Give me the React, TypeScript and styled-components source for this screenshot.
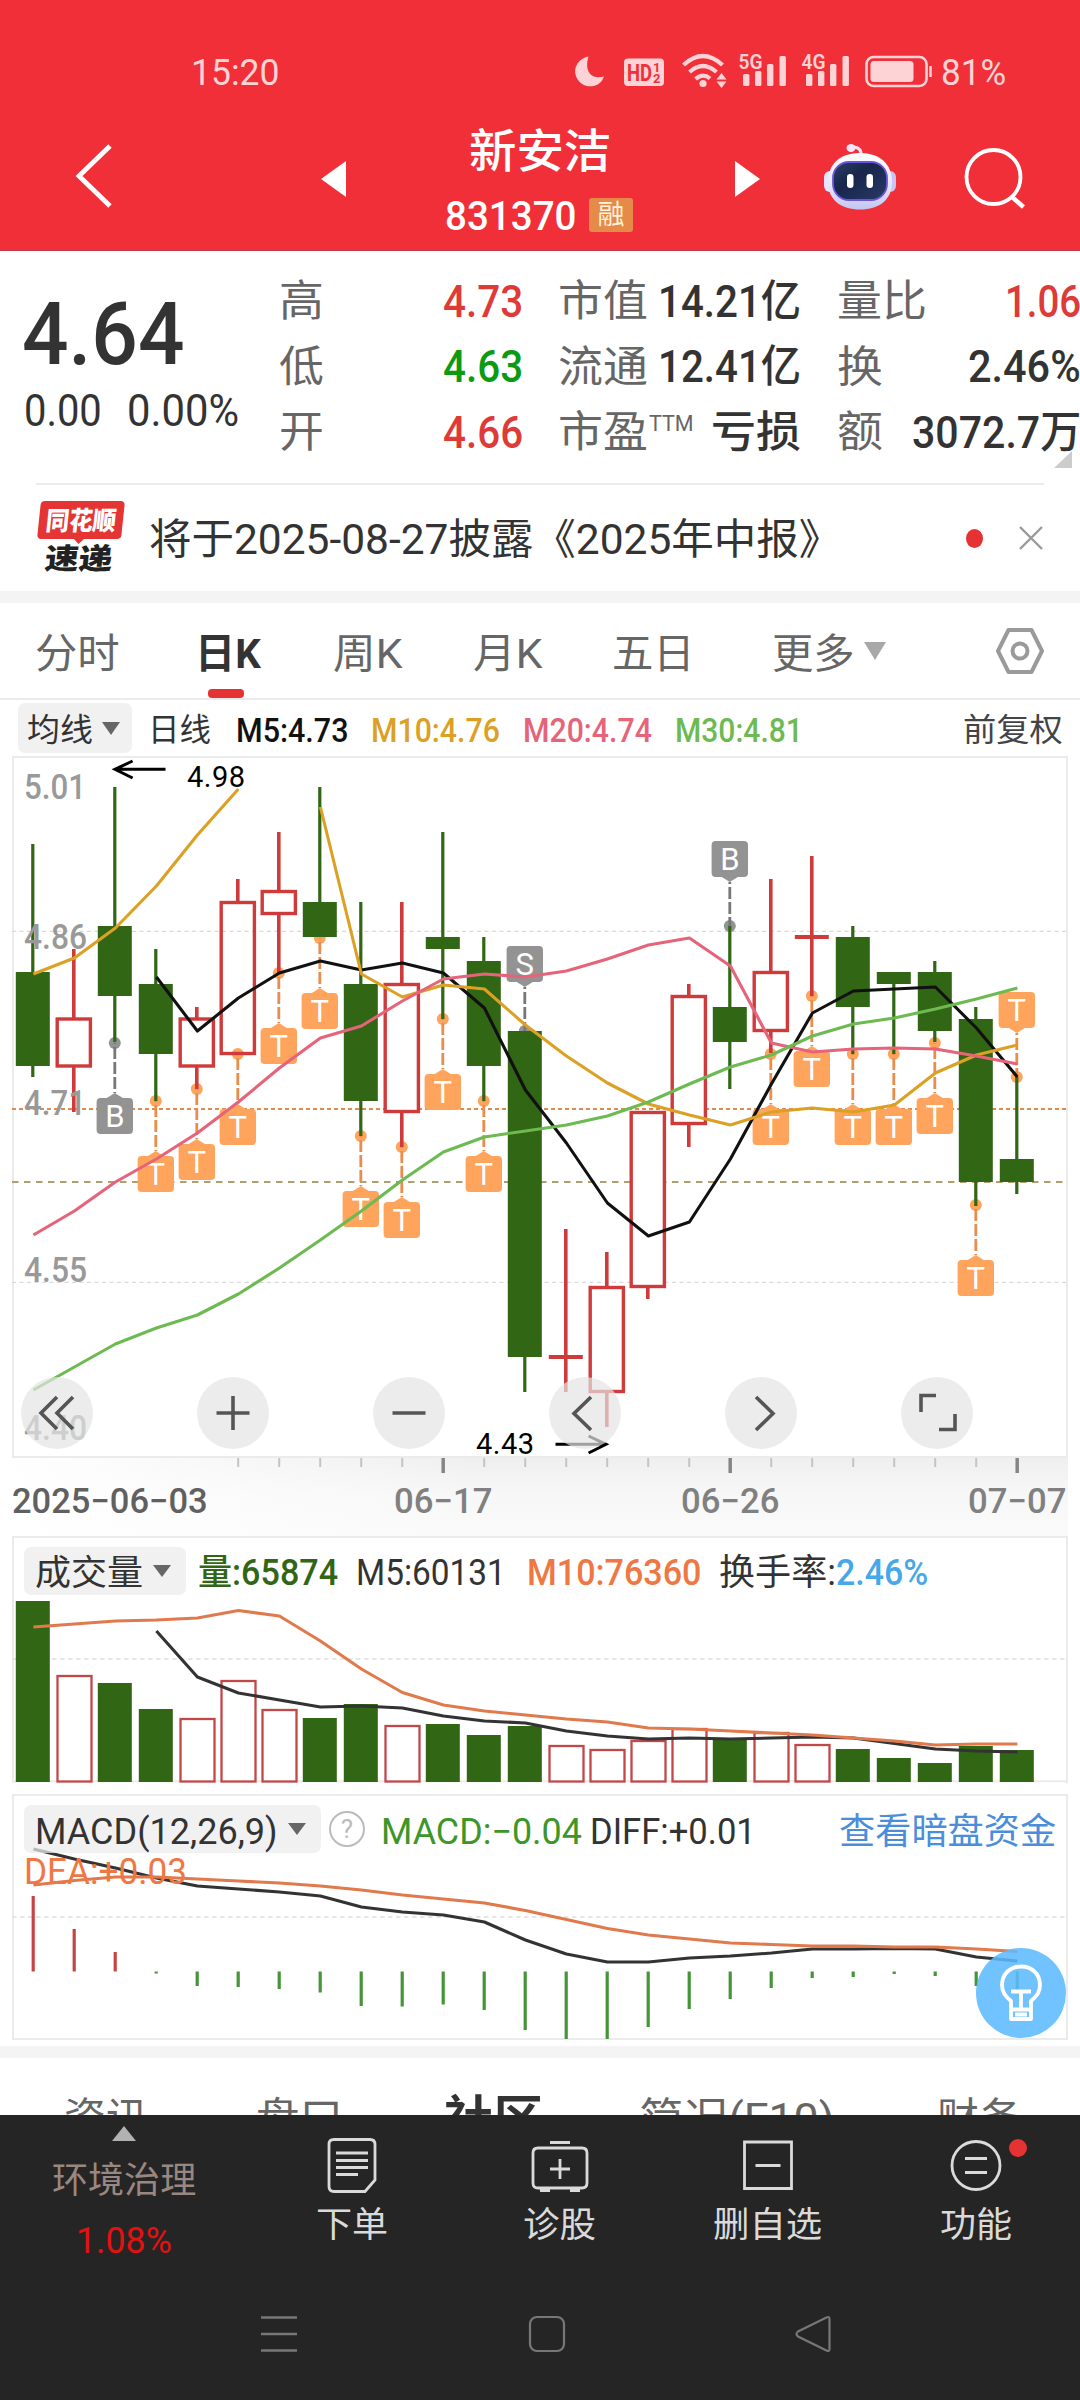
import React, { ReactNode, useLayoutEffect, useRef, useState } from 'react';
import styled, { createGlobalStyle } from 'styled-components';

const Global = createGlobalStyle`
  body { margin: 0; background: #fff; }
  * { box-sizing: border-box; }
  svg { display: block; flex: none; overflow: visible; }
`;

const FONT = 'Roboto, "Noto Sans CJK SC", sans-serif';
const UP = '#cf3a3a';
const DOWN = '#306614';

/* ---------- fitted text ---------- */
const FitBox = styled.span<{ $w: number; $h: number; $ml: number }>`
  display: block;
  flex: none;
  width: ${(p) => p.$w}px;
  height: ${(p) => p.$h}px;
  margin-left: ${(p) => p.$ml}px;
  white-space: nowrap;
`;
const FitInner = styled.span<{ $size: number; $weight: number; $color: string }>`
  display: inline-block;
  vertical-align: top;
  font-size: ${(p) => p.$size}px;
  line-height: 1;
  font-weight: ${(p) => p.$weight};
  color: ${(p) => p.$color};
  margin-left: ${(p) => -p.$size * 0.045}px;
  transform-origin: 0 50%;
`;

type FitProps = { w: number; size: number; color?: string; weight?: number; ml?: number; dy?: number; children: ReactNode };

function Fit({ w, size, color = '#333', weight = 400, ml = 0, dy = 2, children }: FitProps) {
  const ref = useRef<HTMLSpanElement>(null);
  const [scale, setScale] = useState(1);
  useLayoutEffect(() => {
    if (ref.current) setScale((w + size * 0.09) / ref.current.offsetWidth);
  }, [w, size, children]);
  return (
    <FitBox $w={w} $h={size} $ml={ml}>
      <FitInner ref={ref} $size={size} $weight={weight} $color={color} style={{ transform: `translateY(${dy}px) scaleX(${scale})` }}>
        {children}
      </FitInner>
    </FitBox>
  );
}

/* ---------- page ---------- */
const Page = styled.main`
  width: 1080px;
  height: 2400px;
  overflow: hidden;
  display: flex;
  flex-direction: column;
  background: #fff;
  font-family: ${FONT};
`;
const Top = styled.header`
  height: 251px;
  flex: none;
  background: #f12f38;
  border-bottom: 1px solid #b94048;
`;
const StatusBar = styled.div`
  height: 112px;
  padding: 32px 0 0 193px;
  display: flex;
  align-items: center;
`;
const StatusIcons = styled.svg`
  margin-left: 290px;
`;
const TitleBar = styled.div`
  height: 128px;
  padding-left: 72px;
  display: flex;
  align-items: center;
`;
const TitleColumn = styled.div`
  width: 188px;
  height: 128px;
  margin: 0 101px 0 100px;
  padding-top: 15px;
  display: flex;
  flex-direction: column;
  align-items: center;
  gap: 25px;
`;
const CodeLine = styled.div`
  display: flex;
  align-items: center;
  gap: 14px;
  height: 34px;
`;
const MarginTag = styled.span`
  width: 44px;
  height: 34px;
  border-radius: 3px;
  background: #e58a48;
  color: #fff3dc;
  font-size: 27px;
  line-height: 34px;
  text-align: center;
`;
const PrevIcon = styled.svg`
  margin: 6px 0 0 203px;
`;
const NextIcon = styled.svg`
  margin-top: 6px;
`;
const RobotIcon = styled.svg`
  margin-left: 62px;
`;
const SearchIcon = styled.svg`
  margin: 3px 0 0 64px;
`;

/* ---------- quote ---------- */
const Quote = styled.section`
  position: relative;
  height: 232px;
  flex: none;
  display: flex;
  padding: 16px 0 0 26px;
`;
const PriceBlock = styled.div`
  width: 211px;
  padding-top: 25px;
`;
const ChangeLine = styled.div`
  display: flex;
  margin-top: 10px;
`;
const StatColumn = styled.div<{ $ml: number; $w: number }>`
  margin-left: ${(p) => p.$ml}px;
  width: ${(p) => p.$w}px;
  flex: none;
`;
const StatRow = styled.div`
  height: 65.5px;
  display: flex;
  align-items: center;
  justify-content: space-between;
`;
const LabelGroup = styled.div`
  display: flex;
  align-items: flex-start;
`;
const Corner = styled.i`
  position: absolute;
  right: 8px;
  bottom: 15px;
  border-left: 18px solid transparent;
  border-bottom: 17px solid #ccc;
`;

/* ---------- news ---------- */
const News = styled.section`
  height: 108px;
  flex: none;
  margin: 0 36px;
  border-top: 2px solid #ebebeb;
  display: flex;
  align-items: center;
`;
const Logo = styled.div`
  width: 88px;
  height: 74px;
  flex: none;
  margin-left: 1px;
  display: flex;
  flex-direction: column;
  align-items: center;
  gap: 5px;
`;
const LogoTag = styled.div`
  position: relative;
  width: 84px;
  height: 38px;
  padding: 5px 0 0 8px;
  border-radius: 4px;
  background: #e53434;
  transform: skewX(-6deg);
  &::after {
    content: '';
    position: absolute;
    left: 36px;
    top: 37px;
    border: 6px solid transparent;
    border-top-color: #e53434;
    border-bottom: 0;
  }
`;
const LogoWord = styled.div`
  transform: skewX(-6deg);
  margin-left: -6px;
`;
const UnreadDot = styled.i`
  width: 19px;
  height: 19px;
  margin-left: 127px;
  border-radius: 50%;
  background: #e63232;
`;
const CloseIcon = styled.svg`
  margin-left: 35px;
`;
const Band = styled.div<{ $mt?: number }>`
  height: 12px;
  flex: none;
  margin-top: ${(p) => p.$mt ?? 0}px;
  background: #f4f4f4;
`;

/* ---------- chart tabs ---------- */
const PeriodTabs = styled.nav`
  height: 97px;
  flex: none;
  display: flex;
  align-items: center;
  padding-left: 37px;
  border-bottom: 2px solid #ebebeb;
`;
const Tab = styled.div<{ $ml: number; $active?: boolean }>`
  position: relative;
  flex: none;
  margin-left: ${(p) => p.$ml}px;
  &::after {
    content: '';
    display: ${(p) => (p.$active ? 'block' : 'none')};
    position: absolute;
    left: 10px;
    top: 59px;
    width: 36px;
    height: 9px;
    border-radius: 4px;
    background: #e63232;
  }
`;
const CaretDown = styled.i<{ $w: number; $h: number; $color: string; $ml: number }>`
  flex: none;
  margin-left: ${(p) => p.$ml}px;
  border: ${(p) => p.$w / 2}px solid transparent;
  border-top: ${(p) => p.$h}px solid ${(p) => p.$color};
  border-bottom: 0;
`;
const HexIcon = styled.svg`
  margin-left: 109px;
`;
const Legend = styled.div`
  height: 56px;
  flex: none;
  display: flex;
  align-items: center;
  padding-left: 18px;
`;
const Pill = styled.div<{ $w: number; $h: number; $pl: number }>`
  width: ${(p) => p.$w}px;
  height: ${(p) => p.$h}px;
  padding-left: ${(p) => p.$pl}px;
  flex: none;
  display: flex;
  align-items: center;
  border-radius: 7px;
  background: #f1f1f1;
`;
const GlassPill = styled(Pill)`
  background: rgba(236, 236, 236, 0.72);
`;

/* ---------- charts ---------- */
const Panel = styled.section<{ $h: number; $mt?: number }>`
  position: relative;
  height: ${(p) => p.$h}px;
  margin-top: ${(p) => p.$mt ?? 0}px;
  flex: none;
  display: grid;
  > * { grid-area: 1 / 1; }
`;
const PanelHead = styled.div`
  position: relative;
  height: 48px;
  margin: 11px 0 0 24px;
  display: flex;
  align-items: center;
`;
const Controls = styled.div`
  position: relative;
  align-self: end;
  display: flex;
  gap: 104px;
  padding: 0 0 9px 21px;
`;
const RoundButton = styled.button`
  width: 72px;
  height: 72px;
  flex: none;
  padding: 0;
  border: 0;
  border-radius: 50%;
  background: rgba(228, 228, 228, 0.7);
  display: flex;
  align-items: center;
  justify-content: center;
`;
const DateAxis = styled.div`
  height: 78px;
  flex: none;
  display: flex;
  flex-direction: column;
  margin-right: 12px;
  background: linear-gradient(90deg, #fff 0, rgba(255, 255, 255, 0.55) 220px, transparent 480px),
    linear-gradient(#efefef, #f7f7f7 45%, #fafafa);
`;
const DateRow = styled.div`
  display: flex;
  margin-top: 4px;
  padding-left: 14px;
`;
const DeaText = styled.div`
  position: relative;
  margin: 58px 0 0 26px;
`;
const Tip = styled.button`
  position: absolute;
  left: 976px;
  top: 154px;
  width: 90px;
  height: 90px;
  padding: 0;
  border: 0;
  border-radius: 50%;
  background: rgba(92, 186, 255, 0.87);
  display: flex;
  align-items: center;
  justify-content: center;
`;

/* ---------- bottom ---------- */
const InfoTabs = styled.nav`
  height: 57px;
  flex: none;
  overflow: hidden;
  display: flex;
  align-items: flex-start;
  padding: 38px 0 0 66px;
`;
const BoldLift = styled.div`
  margin-top: -3px;
`;
const Nav = styled.nav`
  height: 165px;
  flex: none;
  background: #252525;
  display: flex;
`;
const Sector = styled.div`
  width: 248px;
  padding-top: 11px;
  display: flex;
  flex-direction: column;
  align-items: center;
`;
const CaretUp = styled.i`
  border: 12.5px solid transparent;
  border-bottom: 15px solid #b2b2b2;
  border-top: 0;
  margin-bottom: 20px;
`;
const SectorRate = styled.div`
  margin-top: 26px;
`;
const NavItem = styled.div`
  position: relative;
  width: 208px;
  padding-top: 21px;
  display: flex;
  flex-direction: column;
  align-items: center;
  gap: 12px;
`;
const NavDot = styled.i`
  position: absolute;
  left: 137px;
  top: 24px;
  width: 18px;
  height: 18px;
  border-radius: 50%;
  background: #e63232;
`;
const SystemBar = styled.div`
  height: 120px;
  flex: none;
  background: #252525;
  display: flex;
  align-items: flex-start;
  padding: 34px 0 0 259px;
  gap: 228px;
`;

/* ---------- data ---------- */
const X0 = 32.8;
const STEP = 41;
const cx = (i: number) => X0 + i * STEP;

// high, body top, body bottom, low, rising
const candles: [number, number, number, number, boolean][] = [
  [844, 972, 1066, 1077, false], [949, 1019, 1066, 1112, true], [787, 926, 996, 1042, false],
  [949, 984, 1054, 1101, false], [1007, 1019, 1066, 1089, true], [879, 902.5, 1053.5, 1053, true],
  [832, 891.5, 913.5, 973, true], [787, 902, 937, 937, false], [902, 984, 1101, 1136, false],
  [902, 984.5, 1111.5, 1147, true], [832, 937, 949, 1019, false], [937, 961, 1066, 1101, false],
  [1031, 1031, 1357, 1392, false], [1229, 1357, 1357, 1392, true], [1252, 1287.5, 1391.5, 1427, true],
  [1112, 1112.5, 1286.5, 1299, true], [984, 996.5, 1123.5, 1147, true], [926, 1007, 1042, 1089, false],
  [879, 972.5, 1030.5, 1053, true], [856, 937, 937, 996, true], [926, 937, 1007, 1054, false],
  [972, 972, 984, 1054, false], [961, 972, 1031, 1042, false], [1007, 1019, 1182, 1206, false],
  [1077, 1159, 1182, 1194, false],
];
const ma5 = [977, 1031, 998, 973, 961, 970, 963, 973, 1008, 1090, 1143, 1203, 1236, 1222, 1159, 1084, 1013, 991, 989, 987, 1028, 1077];
const ma10a = [974, 958, 928, 886, 835, 789];
const ma10b = [807, 974, 997, 985, 989, 1025, 1056, 1083, 1104, 1115, 1125, 1112, 1108, 1112, 1105, 1073, 1055, 1045];
const ma20 = [1235, 1211, 1182, 1159, 1133, 1102, 1068, 1038, 1026, 1001, 979, 974, 977, 971, 959, 945, 938, 966, 1043, 1052, 1049, 1048, 1049, 1056, 1064];
const ma30 = [1390, 1367, 1344, 1328, 1315, 1294, 1268, 1240, 1211, 1180, 1152, 1137, 1131, 1125, 1116, 1102, 1084, 1067, 1055, 1036, 1024, 1018, 1009, 999, 988];

type Mark = [number, number, string, boolean];
const marks: Mark[] = [
  [2, 1043, 'B', false], [3, 1101, 'T', false], [4, 1089, 'T', false], [5, 1054, 'T', false],
  [6, 973, 'T', false], [7, 938, 'T', false], [8, 1136, 'T', false], [9, 1147, 'T', false],
  [10, 1019, 'T', false], [11, 1101, 'T', false], [12, 1031, 'S', true], [17, 926, 'B', true],
  [18, 1054, 'T', false], [19, 996, 'T', false], [20, 1054, 'T', false], [21, 1054, 'T', false],
  [22, 1043, 'T', false], [23, 1205, 'T', false], [24, 1077, 'T', true],
];

const volTops = [1601, 1676, 1683, 1709, 1719, 1681, 1710, 1718, 1704, 1726, 1724, 1735, 1726, 1746, 1750, 1741, 1729, 1739, 1733, 1745, 1749, 1758, 1763, 1746, 1750];
const vol10 = [1627, 1624, 1621, 1620, 1618, 1610.5, 1616, 1641, 1669, 1692.5, 1705, 1711, 1715, 1719, 1722, 1728, 1729, 1731, 1733, 1735, 1738, 1741, 1745, 1744, 1744];
const vol5 = [1631, 1677, 1693, 1700, 1707, 1706, 1708, 1716, 1721, 1723, 1731, 1736, 1739, 1738, 1739, 1738, 1737, 1738, 1743.5, 1749, 1751, 1752];
const diff = [1849, 1859, 1868, 1878, 1886, 1889, 1892, 1896, 1907, 1912, 1915, 1922, 1940, 1954, 1962, 1962, 1958, 1956, 1953, 1949, 1949, 1948.5, 1949, 1957, 1961];
const dea = [1885, 1880.5, 1877, 1877, 1879, 1881, 1883, 1886, 1890, 1895, 1899, 1903, 1910.5, 1919.5, 1928.5, 1935, 1939, 1943, 1944.5, 1946, 1946, 1947, 1947, 1949, 1951.5];
const macd = [1896, 1929, 1952, 1973.5, 1986, 1987, 1989, 1992.5, 2006, 2006.5, 2004.5, 2010, 2030, 2039, 2039, 2027, 2009, 1999, 1988, 1978, 1977, 1974, 1976, 1986, 1990];

const pts = (ys: number[], from = 0) => ys.map((y, k) => `${cx(k + from) + 0.6},${y}`).join(' ');

function Line({ ys, from = 0, color }: { ys: number[]; from?: number; color: string }) {
  return <polyline points={pts(ys, from)} fill="none" stroke={color} strokeWidth={3.1} strokeLinejoin="round" />;
}

function Marker({ m: [i, dot, label, above] }: { m: Mark }) {
  const x = cx(i);
  const fill = label === 'T' ? '#fea45d' : '#939393';
  const line = label === 'T' ? '#e88d4c' : '#777';
  const top = above ? dot - 85 : dot + 55;
  const tip = above ? top + 41 : top - 5;
  const base = above ? top + 36 : top;
  return (
    <g>
      <circle cx={x} cy={dot} r={6} fill={fill} />
      <line x1={x} x2={x} y1={dot} y2={tip} stroke={line} strokeWidth={2.8} strokeDasharray="12 3" strokeDashoffset={above ? 3 : -4} />
      <path d={`M${x - 8} ${base}L${x} ${tip}L${x + 8} ${base}z`} fill={fill} />
      <rect x={x - 18.2} y={top} width={36.4} height={36} rx={4} fill={fill} />
      <text x={x} y={top + 28.5} fontSize={31} fill="#fff" textAnchor="middle">{label}</text>
    </g>
  );
}

function PriceChart() {
  return (
    <svg width="1080" height="702" viewBox="0 756 1080 702" fontFamily={FONT}>
      <rect x={13} y={757} width={1054} height={700} fill="#fff" stroke="#ebebeb" strokeWidth={2} />
      <path d="M12 931.3H1066M12 1282.3H1066" stroke="#d9d9d9" strokeWidth={1.2} strokeDasharray="4 3.5" />
      <path d="M12 1109H1066" stroke="#e08a4c" strokeWidth={2} strokeDasharray="4 3" />
      <path d="M12 1182H1066" stroke="#b0a070" strokeWidth={1.8} strokeDasharray="6.5 5.5" />
      {marks.map((m) => <Marker key={m[0]} m={m} />)}
      {candles.map(([hi, t, b, lo, up], i) => {
        const x = cx(i);
        const c = up ? UP : DOWN;
        return (
          <g key={i}>
            <path d={`M${x} ${hi}V${t}M${x} ${b}V${Math.max(lo, b)}`} stroke={c} strokeWidth={up ? 3.6 : 3.2} />
            {t === b ? (
              <path d={`M${x - 17} ${t}H${x + 17}`} stroke={c} strokeWidth={3.8} />
            ) : up ? (
              <rect x={x - 16.6} y={t} width={33.2} height={b - t} fill={i === 5 ? 'none' : '#fff'} stroke={c} strokeWidth={3.4} />
            ) : (
              <rect x={x - 17} y={t} width={34} height={b - t} fill={c} />
            )}
          </g>
        );
      })}
      <g fill="#999" fontSize={35} fontWeight={500}>
        <text x={24} y={799} textLength={62} lengthAdjust="spacingAndGlyphs">5.01</text>
        <text x={24} y={949} textLength={63} lengthAdjust="spacingAndGlyphs">4.86</text>
        <text x={24} y={1115} textLength={62} lengthAdjust="spacingAndGlyphs">4.71</text>
        <text x={24} y={1282} textLength={63} lengthAdjust="spacingAndGlyphs">4.55</text>
        <text x={24} y={1440} textLength={63} lengthAdjust="spacingAndGlyphs">4.40</text>
      </g>
      <Line ys={ma5} from={3} color="#111" />
      <Line ys={ma10a} color="#dca024" />
      <Line ys={ma10b} from={7} color="#dca024" />
      <Line ys={ma20} color="#e5647a" />
      <Line ys={ma30} color="#6cba51" />
      <g fontSize={29} fill="#000">
        <text x={187} y={787} textLength={58}>4.98</text>
        <text x={476} y={1453.5} textLength={58}>4.43</text>
      </g>
      <path d="M165.5 769.3H115M132.6 761L115 769.3L132.6 778M555.5 1444.3H606M588.6 1436L606 1444.3L588.6 1453" fill="none" stroke="#000" strokeWidth={3} />
    </svg>
  );
}

function VolumeChart() {
  return (
    <svg width="1080" height="247" viewBox="0 1536 1080 247">
      <path d="M13 1783V1537H1067V1783" fill="none" stroke="#ebebeb" strokeWidth={2} />
      <path d="M12 1781.3H1067" stroke="#ebebeb" strokeWidth={2} />
      <path d="M12 1659H1066" stroke="#e6e6e6" strokeWidth={1.8} strokeDasharray="4.5 3.5" />
      {volTops.map((t, i) =>
        candles[i][4] ? (
          <rect key={i} x={cx(i) - 16.3} y={t} width={34} height={1781.5 - t} fill="#fff" stroke="#c24848" strokeWidth={2.3} />
        ) : (
          <rect key={i} x={cx(i) - 17} y={t} width={34} height={1782 - t} fill={DOWN} />
        ),
      )}
      <Line ys={vol5} from={3} color="#333" />
      <Line ys={vol10} color="#e07a4c" />
    </svg>
  );
}

function MacdChart() {
  return (
    <svg width="1080" height="246" viewBox="0 1794 1080 246">
      <rect x={13} y={1795} width={1054} height={244} fill="none" stroke="#ebebeb" strokeWidth={2} />
      <path d="M12 1917H1066" stroke="#e6e6e6" strokeWidth={1.8} strokeDasharray="4.5 3.5" />
      {macd.map((y, i) => (
        <path key={i} d={`M${cx(i) + 0.4} 1971.5V${y}`} stroke={i < 3 ? '#c74444' : '#459438'} strokeWidth={3.2} />
      ))}
      <Line ys={diff} color="#333" />
      <Line ys={dea} color="#e07a4c" />
    </svg>
  );
}

function Ticks() {
  return (
    <svg width="1068" height="20" viewBox="0 0 1068 20">
      {Array.from({ length: 20 }, (_, k) => k + 5).map((i) => {
        const big = i % 7 === 3;
        return <path key={i} d={`M${cx(i) + 0.4} 0V${big ? 15 : 9}`} stroke={big ? '#858585' : '#c4c4c4'} strokeWidth={big ? 3.5 : 2} />;
      })}
    </svg>
  );
}

function Status() {
  const c = '#fdd3d5';
  return (
    <StatusIcons width="366" height="40" viewBox="568 52 366 40" fontFamily={FONT}>
      <path d="M588.5 56.5C584 71 591 80 604 76.5C600 89 584 89 578 80C571.5 70 577 59 588.5 56.5z" fill={c} />
      <rect x={624} y={58.5} width={40} height={27.5} rx={4} fill={c} />
      <text x={627} y={80.5} fontSize={23} fontWeight={700} fill="#f12f38" textLength={25} lengthAdjust="spacingAndGlyphs">HD</text>
      <text x={653} y={72} fontSize={13} fontWeight={700} fill="#f12f38">1</text>
      <text x={653} y={83} fontSize={13} fontWeight={700} fill="#f12f38">2</text>
      <g fill="none" stroke={c} strokeWidth={4.2}>
        <path d="M683.5 65Q703 47 722.5 65M689.5 72Q703 60 716.5 72M695.5 79Q703 72.5 710 78.5" />
      </g>
      <circle cx={703} cy={83.5} r={3.6} fill={c} />
      <path d="M721.5 73L726.5 79.5H716.5zM721.5 88L716.5 81.5H726.5z" fill={c} />
      {[0, 63].map((d, k) => (
        <g key={d} fill={c} transform={`translate(${d} 0)`}>
          <text x={738.5} y={69} fontSize={20} fontWeight={600} textLength={24} lengthAdjust="spacingAndGlyphs">{k ? '4G' : '5G'}</text>
          <rect x={743} y={74} width={6.4} height={12} rx={1.5} />
          <rect x={755} y={71} width={6.4} height={15} rx={1.5} />
          <rect x={767} y={64} width={6.4} height={22} rx={1.5} />
          <rect x={779.5} y={56} width={6.4} height={30} rx={1.5} />
        </g>
      ))}
      <rect x={866.5} y={57} width={60} height={29} rx={7} fill="none" stroke={c} strokeWidth={2.6} />
      <rect x={870.5} y={61} width={43} height={21} rx={3.5} fill={c} />
      <path d="M930.5 66V77" stroke={c} strokeWidth={2.5} />
    </StatusIcons>
  );
}

function Robot() {
  return (
    <RobotIcon width="76" height="70" viewBox="823 141 76 70">
      <defs>
        <linearGradient id="shell" x1="0" y1="0" x2="0" y2="1">
          <stop offset="0" stopColor="#fff" /><stop offset=".6" stopColor="#e6e3fb" /><stop offset="1" stopColor="#c3c6f2" />
        </linearGradient>
        <linearGradient id="face" x1="0" y1="0" x2="1" y2="1">
          <stop offset="0" stopColor="#2c3d66" /><stop offset=".4" stopColor="#17264a" /><stop offset="1" stopColor="#2b3a68" />
        </linearGradient>
      </defs>
      <path d="M862 156Q863 148 855 147" fill="none" stroke="#efe3f8" strokeWidth="3" />
      <ellipse cx="852" cy="148" rx="4.5" ry="4" fill="#f3e6fa" />
      <rect x="825" y="171" width="14" height="21" rx="6" fill="#e9e4fb" />
      <rect x="883" y="171" width="14" height="21" rx="6" fill="#c8c3f2" />
      <path d="M861 153C881 153 893 164 893 182C893 200 880 209.5 861 209.5C842 209.5 829 200 829 182C829 164 841 153 861 153z" fill="url(#shell)" />
      <rect x="834" y="162" width="54" height="38" rx="16" fill="url(#face)" stroke="#6b55d8" strokeWidth="1.8" />
      <rect x="848" y="174" width="6.5" height="14" rx="3.2" fill="#fff" />
      <rect x="867.5" y="174" width="6.5" height="14" rx="3.2" fill="#fff" />
    </RobotIcon>
  );
}

const glyphs = [
  'M36 20L20 36L36 52M52 20L36 36L52 52',
  'M36 19V53M19.5 36H52.5',
  'M19.5 36H52.5',
  'M42 20L25 36.5L42 53',
  'M31 20L48 36.5L31 53',
  'M20 35V18.5H35M54 37V52.5H38',
];

function NavIcon({ kind }: { kind: string }) {
  return (
    <svg width="64" height="58" viewBox="0 0 64 58" fill="none" stroke="#dadada" strokeWidth="2.8">
      {kind === 'order' && <path d="M14 3.5H50Q55 3.5 55 8.5V44L45 55.5H14Q9 55.5 9 50.5V8.5Q9 3.5 14 3.5zM16 17H48M16 24.5H48M16 31.5H48M16 38.5H38" />}
      {kind === 'diagnose' && <path d="M10 12H54Q59 12 59 17V47Q59 52 54 52H10Q5 52 5 47V17Q5 12 10 12zM22 6.5H42M32 23V43M22 33H42M12 54.5H22M42 54.5H52" />}
      {kind === 'remove' && <path d="M8.5 6H55.5V52.5H8.5zM19.5 29.5H44.5" />}
      {kind === 'more' && <><circle cx="32" cy="29.5" r="24" /><path d="M21 22.5H43M21 36.5H43" /></>}
    </svg>
  );
}

export default function App() {
  return (
    <Page>
      <Global />
      <Top>
        <StatusBar>
          <Fit w={85} size={37} color="#fdd3d5" dy={0}>15:20</Fit>
          <Status />
          <Fit w={62} size={37} color="#fdd3d5" ml={9} dy={0}>81%</Fit>
        </StatusBar>
        <TitleBar>
          <svg width="46" height="70" viewBox="0 0 46 70"><path d="M38 5L7 35L38 65" fill="none" stroke="#fff" strokeWidth="4.8" /></svg>
          <PrevIcon width="25" height="36"><path d="M0 18L25 0V36z" fill="#fff" /></PrevIcon>
          <TitleColumn>
            <Fit w={138} size={46} color="#fff" weight={500} dy={1}>新安洁</Fit>
            <CodeLine>
              <Fit w={128} size={41} color="#fff" weight={500} dy={1}>831370</Fit>
              <MarginTag>融</MarginTag>
            </CodeLine>
          </TitleColumn>
          <NextIcon width="25" height="36"><path d="M25 18L0 0V36z" fill="#fff" /></NextIcon>
          <Robot />
          <SearchIcon width="64" height="64" viewBox="963 146 64 64"><circle cx="994.5" cy="177" r="27" fill="none" stroke="#fff" strokeWidth="3.8" /><path d="M1012 196L1024.5 207" stroke="#fff" strokeWidth="4.5" /></SearchIcon>
        </TitleBar>
      </Top>

      <Quote>
        <PriceBlock>
          <Fit w={155} size={88} weight={500} dy={-2}>4.64</Fit>
          <ChangeLine>
            <Fit w={74} size={44} dy={-1}>0.00</Fit>
            <Fit w={108} size={44} ml={29} dy={-1}>0.00%</Fit>
          </ChangeLine>
        </PriceBlock>
        <StatColumn $ml={44} $w={240}>
          <StatRow><Fit w={41} size={43} color="#666">高</Fit><Fit w={76} size={44} color="#dd3a38" weight={500}>4.73</Fit></StatRow>
          <StatRow><Fit w={41} size={43} color="#666">低</Fit><Fit w={76} size={44} color="#0c9a12" weight={500}>4.63</Fit></StatRow>
          <StatRow><Fit w={41} size={43} color="#666">开</Fit><Fit w={76} size={44} color="#dd3a38" weight={500}>4.66</Fit></StatRow>
        </StatColumn>
        <StatColumn $ml={39} $w={239}>
          <StatRow><Fit w={86} size={43} color="#666">市值</Fit><Fit w={139} size={44} weight={500}>14.21亿</Fit></StatRow>
          <StatRow><Fit w={86} size={43} color="#666">流通</Fit><Fit w={139} size={44} weight={500}>12.41亿</Fit></StatRow>
          <StatRow>
            <LabelGroup><Fit w={86} size={43} color="#666">市盈</Fit><Fit w={43} size={22} color="#666" ml={4} dy={4}>TTM</Fit></LabelGroup>
            <Fit w={86} size={43} weight={500}>亏损</Fit>
          </StatRow>
        </StatColumn>
        <StatColumn $ml={40} $w={240}>
          <StatRow><Fit w={86} size={43} color="#666">量比</Fit><Fit w={72} size={44} color="#dd3a38" weight={500}>1.06</Fit></StatRow>
          <StatRow><Fit w={42} size={43} color="#666">换</Fit><Fit w={109} size={44} weight={500}>2.46%</Fit></StatRow>
          <StatRow><Fit w={42} size={43} color="#666">额</Fit><Fit w={165} size={44} weight={500}>3072.7万</Fit></StatRow>
        </StatColumn>
        <Corner />
      </Quote>

      <News>
        <Logo>
          <LogoTag><Fit w={68} size={26} color="#fff" weight={900}>同花顺</Fit></LogoTag>
          <LogoWord><Fit w={65} size={29} color="#222" weight={900} dy={1}>速递</Fit></LogoWord>
        </Logo>
        <Fit w={688} size={42} ml={26}>将于2025-08-27披露《2025年中报》</Fit>
        <UnreadDot />
        <CloseIcon width="26" height="26" viewBox="0 0 26 26"><path d="M2 2L24 24M24 2L2 24" stroke="#999" strokeWidth="2.4" /></CloseIcon>
      </News>
      <Band />

      <PeriodTabs>
        <Tab $ml={0}><Fit w={81} size={41} color="#666" dy={4}>分时</Fit></Tab>
        <Tab $ml={80} $active><Fit w={62} size={41} weight={700} dy={4} ml={-1}>日K</Fit></Tab>
        <Tab $ml={76}><Fit w={66} size={41} color="#666" dy={4}>周K</Fit></Tab>
        <Tab $ml={74}><Fit w={66} size={41} color="#666" dy={4}>月K</Fit></Tab>
        <Tab $ml={73}><Fit w={79} size={41} color="#666" dy={4}>五日</Fit></Tab>
        <Tab $ml={81}><Fit w={79} size={41} color="#666" dy={4}>更多</Fit></Tab>
        <CaretDown $w={22} $h={18} $color="#a8a8a8" $ml={11} />
        <HexIcon width="50" height="48" viewBox="0 0 50 48"><path d="M13.5 3H36.5L47 24L36.5 45H13.5L3 24z" fill="none" stroke="#9a9a9a" strokeWidth="4" strokeLinejoin="round" /><circle cx="25" cy="24" r="7.5" fill="none" stroke="#9a9a9a" strokeWidth="4" /></HexIcon>
      </PeriodTabs>

      <Legend>
        <Pill $w={114} $h={50} $pl={10}>
          <Fit w={63} size={32}>均线</Fit>
          <CaretDown $w={18} $h={13} $color="#666" $ml={11} />
        </Pill>
        <Fit w={60} size={32} ml={17}>日线</Fit>
        <Fit w={109} size={34} color="#111" weight={500} ml={29}>M5:4.73</Fit>
        <Fit w={126} size={34} color="#dca024" weight={500} ml={26}>M10:4.76</Fit>
        <Fit w={126} size={34} color="#e5647a" weight={500} ml={26}>M20:4.74</Fit>
        <Fit w={125} size={34} color="#6cba51" weight={500} ml={26}>M30:4.81</Fit>
        <Fit w={97} size={32} color="#444" ml={162}>前复权</Fit>
      </Legend>

      <Panel $h={702}>
        <PriceChart />
        <Controls>
          {glyphs.map((d) => (
            <RoundButton key={d}><svg width="72" height="72" viewBox="0 0 72 72"><path d={d} fill="none" stroke="#555" strokeWidth="3.6" /></svg></RoundButton>
          ))}
        </Controls>
      </Panel>

      <DateAxis>
        <Ticks />
        <DateRow>
          <Fit w={193} size={35} color="#606060" weight={500}>2025−06−03</Fit>
          <Fit w={95} size={35} color="#808080" weight={500} ml={189}>06−17</Fit>
          <Fit w={95} size={35} color="#808080" weight={500} ml={192}>06−26</Fit>
          <Fit w={95} size={35} color="#808080" weight={500} ml={192}>07−07</Fit>
        </DateRow>
      </DateAxis>

      <Panel $h={247}>
        <VolumeChart />
        <PanelHead>
          <Pill $w={162} $h={48} $pl={13}>
            <Fit w={105} size={35}>成交量</Fit>
            <CaretDown $w={18} $h={12} $color="#666" $ml={11} />
          </Pill>
          <Fit w={137} size={36} color={DOWN} weight={500} ml={14}>量:65874</Fit>
          <Fit w={147} size={36} ml={21}>M5:60131</Fit>
          <Fit w={171} size={36} color="#ef7744" weight={500} ml={24}>M10:76360</Fit>
          <Fit w={114} size={36} ml={21}>换手率:</Fit>
          <Fit w={89} size={36} color="#45a8e8" weight={500} ml={3}>2.46%</Fit>
        </PanelHead>
      </Panel>

      <Panel $h={246} $mt={11}>
        <MacdChart />
        <PanelHead>
          <GlassPill $w={297} $h={48} $pl={13}>
            <Fit w={239} size={36} dy={3}>MACD(12,26,9)</Fit>
            <CaretDown $w={18} $h={12} $color="#666" $ml={12} />
          </GlassPill>
          <svg width="52" height="38" viewBox="-8 0 52 38"><circle cx="18" cy="19" r="17" fill="none" stroke="#bbb" strokeWidth="2" /><text x="18" y="28" textAnchor="middle" fontSize="26" fill="#bbb" fontFamily={FONT}>?</text></svg>
          <Fit w={198} size={36} color="#3c9628" ml={10} dy={3}>MACD:−0.04</Fit>
          <Fit w={163} size={36} ml={11} dy={3}>DIFF:+0.01</Fit>
          <Fit w={214} size={36} color="#4a8edb" ml={86} dy={3}>查看暗盘资金</Fit>
        </PanelHead>
        <DeaText><Fit w={160} size={36} color="#ef7744">DEA:+0.03</Fit></DeaText>
        <Tip>
          <svg width="48" height="60" viewBox="0 0 48 60" fill="none" stroke="#fff" strokeWidth="3.8" strokeLinejoin="round"><path d="M14 38C8 33 5 29 5 22C5 10 14 3.5 24 3.5C34 3.5 43 10 43 22C43 29 40 33 34 38V56H14zM14 28.5H34M24 28.5V46M14 46.5H34M18 51.5H30" /></svg>
        </Tip>
      </Panel>

      <Band $mt={6} />
      <InfoTabs>
        <Fit w={80} size={42} color="#666">资讯</Fit>
        <Fit w={83} size={42} color="#666" ml={112}>盘口</Fit>
        <BoldLift><Fit w={95} size={48} weight={700} ml={105}>社区</Fit></BoldLift>
        <Fit w={191} size={42} color="#666" ml={100}>简况(F10)</Fit>
        <Fit w={80} size={42} color="#666" ml={107}>财务</Fit>
      </InfoTabs>

      <Nav>
        <Sector>
          <CaretUp />
          <Fit w={141} size={36} color="#9a8780">环境治理</Fit>
          <SectorRate><Fit w={93} size={36} color="#e01212" dy={0}>1.08%</Fit></SectorRate>
        </Sector>
        <NavItem><NavIcon kind="order" /><Fit w={69} size={35} color="#dadada">下单</Fit></NavItem>
        <NavItem><NavIcon kind="diagnose" /><Fit w={70} size={35} color="#dadada">诊股</Fit></NavItem>
        <NavItem><NavIcon kind="remove" /><Fit w={106} size={35} color="#dadada">删自选</Fit></NavItem>
        <NavItem><NavIcon kind="more" /><Fit w={69} size={35} color="#dadada">功能</Fit><NavDot /></NavItem>
      </Nav>
      <SystemBar>
        <svg width="40" height="40" viewBox="0 0 40 40"><path d="M2 3.5H38M2 20H38M2 36.5H38" stroke="#777" strokeWidth="2.6" /></svg>
        <svg width="40" height="40" viewBox="0 0 40 40"><rect x="3" y="3" width="34" height="34" rx="7" fill="none" stroke="#777" strokeWidth="2.2" /></svg>
        <svg width="40" height="40" viewBox="0 0 40 40"><path d="M34.5 5V35Q34.5 38 31.5 36.5L3 22.5Q0 20 3 17.5L31.5 3.5Q34.5 2 34.5 5z" fill="none" stroke="#777" strokeWidth="2.2" /></svg>
      </SystemBar>
    </Page>
  );
}
